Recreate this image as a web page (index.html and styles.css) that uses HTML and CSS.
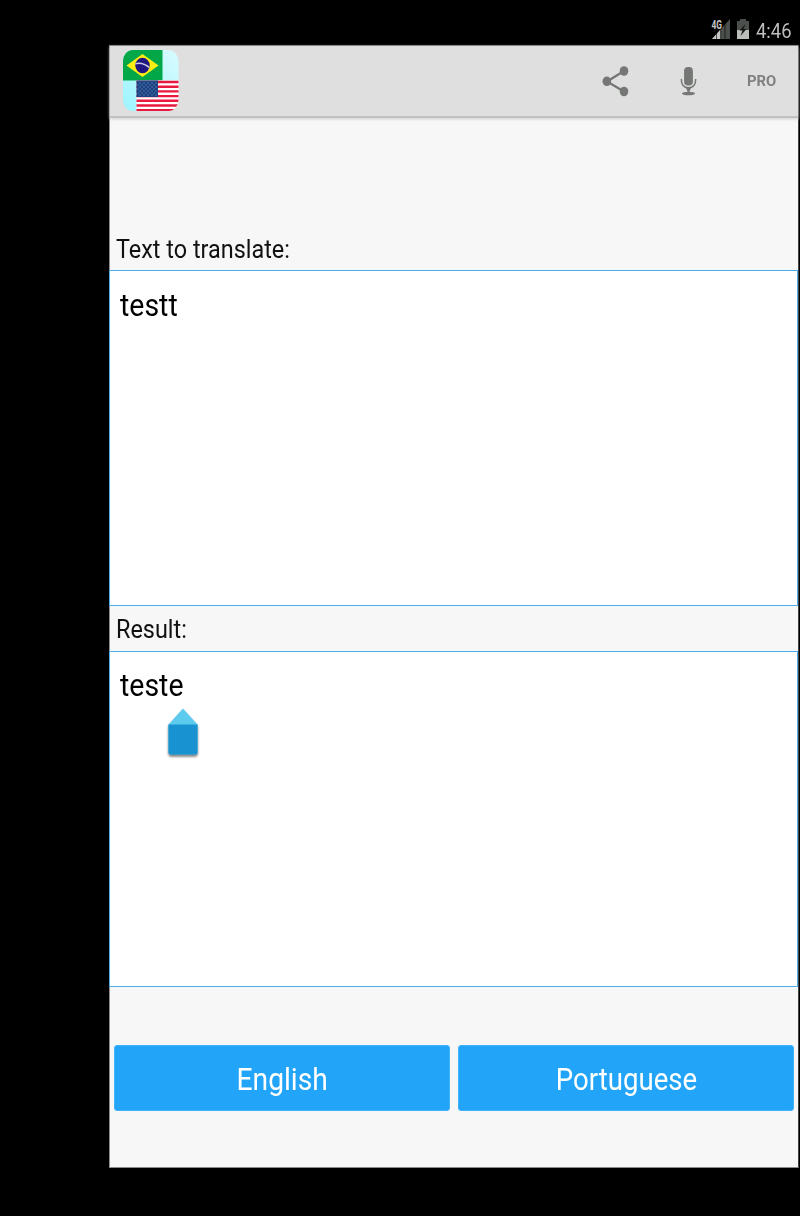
FILE: index.html
```html
<!DOCTYPE html>
<html lang="en">
<head>
<meta charset="utf-8">
<title>Translator</title>
<link rel="stylesheet" href="styles.css">
</head>
<body>
<div class="statusbar">
  <svg class="signal" width="20" height="21" viewBox="0 0 20 21">
    <path d="M1 20L19 0V20Z" fill="#4b504c"/>
    <path d="M1 20L9.500 10.500V20Z" fill="#c4c6c4"/>
    <path d="M5.500 11V20M9.700 8V20M14 4V20" stroke="#000" stroke-width=".6"/>
    <path d="M0 0H11V10H0Z" fill="#000"/>
    <text class="network" x="0.500" y="9.500" textLength="10.500" lengthAdjust="spacingAndGlyphs">4G</text>
  </svg>
  <svg class="battery" width="12" height="20" viewBox="0 0 12 20">
    <path d="M0 2H3V0H9V2H12V20H0Z" fill="#4b504c"/>
    <path d="M0 11H12V20H0Z" fill="#bcbebc"/>
    <path d="M8.500 5L2.500 11.500H5.500L3.500 17L9.500 10H6.500Z" fill="#151715"/>
  </svg>
  <span class="clock">4:46</span>
</div>
<main class="app">
  <header class="toolbar">
    <svg class="logo" width="56" height="62" viewBox="0 0 56 62">
      <defs>
        <clipPath id="tile"><rect width="55.500" height="61" rx="10" ry="11"/></clipPath>
        <clipPath id="globe"><ellipse cx="19.500" cy="15.500" rx="7.200" ry="7.800"/></clipPath>
        <linearGradient id="sky" x1="1" y1="0" x2="0" y2="1"><stop stop-color="#d9fbff"/><stop offset="1" stop-color="#9cf4ff"/></linearGradient>
        <pattern id="stars" width="4" height="4" patternUnits="userSpaceOnUse"><circle cx="1" cy="1" r=".7" fill="#6583b1"/><circle cx="3" cy="3" r=".7" fill="#6583b1"/></pattern>
      </defs>
      <g clip-path="url(#tile)">
        <path d="M0 0H56V62H0Z" fill="url(#sky)"/>
        <path d="M0 0H39.500V30.500H0Z" fill="#02a847"/>
        <path d="M3.500 15.500L19.500 4L35.500 15.500L19.500 27Z" fill="#ffee13"/>
        <ellipse cx="19.500" cy="15.500" rx="7.200" ry="7.800" fill="#211580"/>
        <path d="M11 14Q20 11 28 19" fill="none" stroke="#c6c9e2" stroke-width="1.500" clip-path="url(#globe)"/>
        <path d="M13.500 30.500H56V62H13.500Z" fill="#fff"/>
        <path d="M13.500 32H56M13.500 36.700H56M13.500 41.400H56M13.500 46.100H56M13.500 50.800H56M13.500 55.500H56M13.500 60.200H56" stroke="#e9193f" stroke-width="2.400"/>
        <path d="M13.500 30.500H35V47H13.500Z" fill="#1a4182"/>
        <path d="M14.500 31.500H34.500V46H14.500Z" fill="url(#stars)"/>
      </g>
    </svg>
    <svg class="share" width="27" height="31" viewBox="0 0 27 31">
      <path d="M22 5L5 15.500L22 25.500" fill="none" stroke="#757775" stroke-width="2.300"/>
      <g fill="#757775"><ellipse cx="22" cy="5" rx="4.300" ry="4.800"/><ellipse cx="4.800" cy="15.300" rx="4.300" ry="4.800"/><ellipse cx="22" cy="25.500" rx="4.300" ry="4.800"/></g>
    </svg>
    <svg class="mic" width="17" height="29" viewBox="-.5 0 17 29">
      <rect x="3.600" y="0" width="8.800" height="18.500" rx="3.800" fill="#757775"/>
      <path d="M.8 12C.8 17 2.500 20.800 8 20.800S15.200 17 15.200 12M8 21V26" fill="none" stroke="#757775" stroke-width="1.500"/>
      <path d="M5.500 21H10.500L8.700 25H7.300Z" fill="#757775"/>
      <ellipse cx="8" cy="26.500" rx="6.500" ry="1.800" fill="#757775"/>
    </svg>
    <span class="pro">PRO</span>
  </header>
  <div class="ad"></div>
  <div class="label"><span class="cond">Text to translate:</span></div>
  <div class="field"><span class="cond">testt</span></div>
  <div class="label result"><span class="cond">Result:</span></div>
  <div class="field output"><span class="cond">teste</span>
    <svg class="handle" width="34" height="54" viewBox="0 0 34 54">
      <path d="M17 .5L31.500 16.500V44Q31.500 46.500 29 46.500H5Q2.500 46.500 2.500 44V16.500Z" fill="#5dcbee"/>
      <path d="M2.500 16.500H31.500V44Q31.500 46.500 29 46.500H5Q2.500 46.500 2.500 44Z" fill="#1992d1"/>
    </svg>
  </div>
  <div class="languages">
    <button class="language"><span class="cond">English</span></button>
    <button class="language"><span class="cond wide">Portuguese</span></button>
  </div>
</main>
</body>
</html>
```
FILE: styles.css
```css
* { box-sizing: border-box; }
body {
  margin: 0;
  width: 800px;
  height: 1216px;
  overflow: hidden;
  background: #000;
  font-family: Roboto, sans-serif;
  color: #111;
}
.statusbar {
  height: 45px;
  padding: 19px 9px 0 0;
  display: flex;
  justify-content: flex-end;
  align-items: flex-start;
}
.network { font: bold 12px Roboto, sans-serif; fill: #c4c6c4; }
.battery { margin-left: 6px; }
.clock {
  width: 35px;
  margin-left: 7px;
  font-size: 20px;
  line-height: 24px;
  white-space: nowrap;
  color: #bebebe;
  transform: scaleX(.92);
  transform-origin: left;
}
.app {
  width: 690px;
  height: 1123px;
  margin-left: 109px;
  border: 1px solid #8c8c8c;
  border-top-color: #777;
  border-right-color: #444;
  background: #f7f7f7;
}
.toolbar {
  height: 72px;
  padding: 4px 0 0 13px;
  display: flex;
  align-items: flex-start;
  background: #dfdfdf;
  border-bottom: 2px solid #c1c1c1;
  box-shadow: 0 1px 3px #ccc;
}
.toolbar > * { flex: none; }
.share { margin: 16px 0 0 423px; }
.mic { margin: 17px 0 0 51px; }
.pro {
  width: 30px;
  margin: 23px 0 0 50px;
  font-size: 14px;
  font-weight: 700;
  line-height: 17px;
  color: #808080;
  transform: scaleX(1.06);
  transform-origin: left;
}
.ad { height: 110px; }
.cond {
  display: inline-block;
  white-space: nowrap;
  transform: scaleX(.918);
  transform-origin: left;
}
.label {
  height: 42px;
  padding: 5px 0 0 6px;
  font-size: 25.500px;
  line-height: 32px;
}
.label.result { height: 45px; padding-top: 7px; }
.field {
  position: relative;
  width: 689px;
  height: 336px;
  margin-left: -1px;
  padding: 17px 0 0 10.400px;
  font-size: 31px;
  line-height: 36px;
  color: #000;
  background: #fff;
  border: 1px solid #4eaced;
}
.field.output { padding-top: 16px; }
.handle {
  position: absolute;
  left: 56px;
  top: 56px;
  filter: drop-shadow(0 2px 1px rgba(0, 0, 0, .5));
}
.languages {
  display: flex;
  gap: 8px;
  padding: 58px 4px 0;
}
.language {
  flex: 1;
  height: 66px;
  padding: 3px 0 0;
  border: 1px solid #42b3fb;
  border-radius: 3px;
  background: #22a5f8;
  color: #fff;
  font: 31px/36px Roboto, sans-serif;
}
.language .cond { transform: scaleX(.91); transform-origin: center; }
.language .wide { transform: scaleX(.89); }
```
